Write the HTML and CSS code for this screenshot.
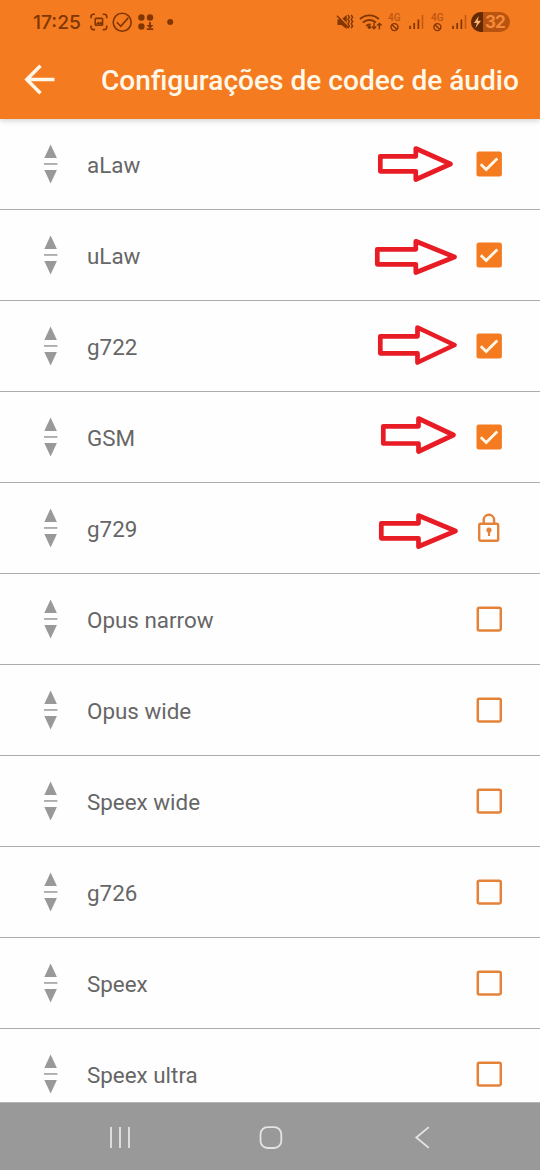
FILE: index.html
```
<!DOCTYPE html>
<html lang="pt">
<head>
<meta charset="utf-8">
<title>Configurações de codec de áudio</title>
<link rel="stylesheet" href="styles.css">
</head>
<body>
<svg class="defs" width="0" height="0" aria-hidden="true">
  <symbol id="drag" viewBox="0 0 14 40"><path d="M6.6 .5 12.9 14H.3ZM.3 26h12.6L6.6 39.5Z"/><path d="M0 19.2h13.4v1.5H0Z"/></symbol>
  <symbol id="on" viewBox="0 0 26 26"><rect x=".5" y=".5" width="25.4" height="25" rx="2.5" fill="#f47b20"/><path d="m4.8 13.3 5.4 5.2L21.3 7.4" fill="none" stroke="#fff8e8" stroke-width="2.8"/></symbol>
  <symbol id="off" viewBox="0 0 26 26"><rect x="1.8" y="1.8" width="23" height="22.6" rx="1.5" fill="none" stroke="#e5823a" stroke-width="2.5"/></symbol>
  <symbol id="lock" viewBox="0 0 26 30"><g fill="none" stroke="#e5823a" stroke-width="2.4"><rect x="3.2" y="10.8" width="19" height="17" rx="1.5"/><path d="M7.7 10.5V7a5.2 5.2 0 0 1 10.4 0v3.5"/></g><circle cx="13" cy="17" r="2.6" fill="#e5823a"/><path d="M13 17v6" stroke="#e5823a" stroke-width="2.2"/></symbol>
</svg>
<div class="screen">
  <header class="header">
    <div class="status">
      <span class="clock">17:25</span>
      <svg class="notices" width="86" height="22" viewBox="0 0 86 22">
        <g fill="none" stroke="#813600" stroke-width="1.6">
          <path d="M1 7.3V5.5a2.3 2.3 0 0 1 2.3-2.3H5M12.7 3.2h1.7a2.3 2.3 0 0 1 2.3 2.3v1.8M16.7 14.5v1.8a2.3 2.3 0 0 1-2.3 2.3h-1.7M5 18.6H3.3A2.3 2.3 0 0 1 1 16.3v-1.8"/>
          <rect x="5.2" y="7.4" width="7.4" height="6.8" rx=".8"/>
          <circle cx="32.2" cy="11.3" r="9"/>
          <path d="m26.8 11.2 4 4.2 7.4-8.5"/>
        </g>
        <g fill="#813600">
          <path d="m5.5 13.5 2.6-3 1.5 1.2 1.4-1.5 2 3.3Z"/>
          <circle cx="51.4" cy="6.5" r="3.2"/><circle cx="60" cy="6.5" r="3.2"/><circle cx="51.4" cy="15.5" r="3.2"/>
          <path d="M59.1 11h1.8v3h2.6L60 17.4 56.5 14h2.6ZM56.8 17.3h6.4V19h-6.4Z"/>
          <circle cx="80.2" cy="11" r="3"/>
        </g>
      </svg>
      <svg class="indicators" width="132" height="22" viewBox="0 0 132 22">
        <path d="M1.5 8.2h4l5.2-4.1v14l-5.2-4h-4Z" fill="#813600"/>
        <path d="m1 3.7 13.5 13.8" stroke="#f47b20" stroke-width="2.4"/>
        <path d="m1 4.7 12 12.5M11.9 4l1.5 2.2-1.5 2.2 1.5 2.2-1.5 2.2 1.5 2.2-1.5 2.2M15.2 4l1.4 2.2-1.4 2.2 1.4 2.2-1.4 2.2 1.4 2.2-1.4 2.2" fill="none" stroke="#813600" stroke-width="1.4"/>
        <g fill="none" stroke="#813600" stroke-width="1.9"><path d="M24 8a14 14 0 0 1 18.8 0M26.9 11.6a9.5 9.5 0 0 1 13-.1M30.2 15a5.5 5.5 0 0 1 4.5-1.4"/></g>
        <circle cx="33.4" cy="16.2" r="1.7" fill="#813600"/>
        <path d="M38 11.7v6M35.8 15.6l2.2 2.2 2.2-2.2M43.4 18.5v-6M41.2 14.6l2.2-2.2 2.2 2.2" fill="none" stroke="#813600" stroke-width="1.4"/>
        <g font-family="Roboto, sans-serif" font-size="10" font-weight="500" fill="#bd5710"><text x="52" y="10">4G</text><text x="95" y="10">4G</text></g>
        <g fill="none" stroke="#813600" stroke-width="1.4"><circle cx="58.5" cy="16.1" r="3.5"/><path d="m56 13.7 5 4.8"/><circle cx="101.4" cy="16.1" r="3.5"/><path d="m98.9 13.7 5 4.8"/></g>
        <g stroke="#813600" stroke-width="1.7"><path d="M74 14.8v3.2M78.2 12v6M82.4 8.5V18M117 14.8v3.2M121.2 12v6M125.4 8.5V18"/></g>
        <path d="M86.5 4v14M129.5 4v14" stroke="#c25a10" stroke-width="1.6"/>
      </svg>
      <span class="battery"><svg width="12" height="20" viewBox="0 0 12 20"><path d="M0 0h12v20H0Z" fill="#642a04"/><path d="M7.7 4 3 11h3l-1.5 5L10 8.7H6.7Z" fill="#ffb472"/></svg><b>32</b></span>
    </div>
    <div class="toolbar">
      <svg class="back" width="32" height="32" viewBox="0 0 32 32"><path d="M30.5 15.5H3M16.5 1.8 2.8 15.5l13.7 13.7" fill="none" stroke="#fff8e8" stroke-width="3.5"/></svg>
      <h1>Configurações de codec de áudio</h1>
    </div>
  </header>
  <main class="list">
    <div class="row"><svg class="drag"><use href="#drag"/></svg><span class="name">aLaw</span><svg class="box"><use href="#on"/></svg></div>
    <div class="row"><svg class="drag"><use href="#drag"/></svg><span class="name">uLaw</span><svg class="box"><use href="#on"/></svg></div>
    <div class="row"><svg class="drag"><use href="#drag"/></svg><span class="name">g722</span><svg class="box"><use href="#on"/></svg></div>
    <div class="row"><svg class="drag"><use href="#drag"/></svg><span class="name">GSM</span><svg class="box"><use href="#on"/></svg></div>
    <div class="row"><svg class="drag"><use href="#drag"/></svg><span class="name">g729</span><svg class="box lock"><use href="#lock"/></svg></div>
    <div class="row"><svg class="drag"><use href="#drag"/></svg><span class="name">Opus narrow</span><svg class="box"><use href="#off"/></svg></div>
    <div class="row"><svg class="drag"><use href="#drag"/></svg><span class="name">Opus wide</span><svg class="box"><use href="#off"/></svg></div>
    <div class="row"><svg class="drag"><use href="#drag"/></svg><span class="name">Speex wide</span><svg class="box"><use href="#off"/></svg></div>
    <div class="row"><svg class="drag"><use href="#drag"/></svg><span class="name">g726</span><svg class="box"><use href="#off"/></svg></div>
    <div class="row"><svg class="drag"><use href="#drag"/></svg><span class="name">Speex</span><svg class="box"><use href="#off"/></svg></div>
    <div class="row"><svg class="drag"><use href="#drag"/></svg><span class="name">Speex ultra</span><svg class="box"><use href="#off"/></svg></div>
  </main>
  <nav class="nav">
    <svg width="24" height="24" viewBox="0 0 24 24"><path d="M3 1v21M12 1v21M21 1v21"/></svg>
    <svg width="24" height="24" viewBox="0 0 24 24"><rect x="1.5" y="1.2" width="20.8" height="20.8" rx="7"/></svg>
    <svg width="24" height="24" viewBox="0 0 24 24"><path d="M18.8 1.1 6.3 11.5l12.5 10.4"/></svg>
  </nav>
  <svg class="arrows" viewBox="370 140 100 420">
    <path d="M380.3 156.3h35.5v-7.8L450.5 164l-34.7 15.5v-8.2h-35.5Z"/>
    <path d="M377.3 249.3h38.5v-8L454.5 257l-38.7 15.5v-8.2h-38.5Z"/>
    <path d="M380.3 336.3h37.2v-8.8L454.5 345l-37 17.5v-9.2h-37.2Z"/>
    <path d="M383.3 426.3h35.2v-7.8L453.5 435l-35 16.5v-8h-35.2Z"/>
    <path d="M381.3 523.3h37.2v-7.8L455.5 531l-37 15.5v-8.2h-37.2Z"/>
  </svg>
</div>
</body>
</html>
```
FILE: styles.css
```
body {
  margin: 0;
  background: #fefefe;
  font-family: Roboto, sans-serif;
}
.defs {
  position: absolute;
}
.screen {
  position: relative;
  display: flex;
  flex-direction: column;
  width: 540px;
  height: 1170px;
  overflow: hidden;
}
.header {
  flex: none;
  height: 119px;
  background: #f57b20;
  box-shadow: 0 1px 6px rgba(0, 0, 0, .22);
  z-index: 1;
}
.status {
  display: flex;
  align-items: center;
  height: 44px;
  padding: 0 30px 0 33px;
}
.clock {
  width: 57px;
  font: 500 19.3px/22px Inter, sans-serif;
  color: #813600;
}
.indicators {
  margin-left: auto;
  margin-right: 3px;
}
.battery {
  display: flex;
  align-items: center;
  width: 39px;
  height: 20px;
  border-radius: 10px;
  overflow: hidden;
  background: #b95410;
}
.battery b {
  margin-left: 2px;
  font: 700 17px/20px Inter, sans-serif;
  letter-spacing: -1px;
  color: #f58a39;
}
.toolbar {
  display: flex;
  align-items: center;
  height: 72px;
  padding-left: 24px;
}
.toolbar h1 {
  margin: 2px 0 0 45px;
  font-size: 28.08px;
  font-weight: 500;
  line-height: 36px;
  white-space: nowrap;
  color: #fff8e8;
}
.list {
  flex: 1;
  min-height: 0;
  overflow: hidden;
}
.row {
  display: flex;
  align-items: center;
  box-sizing: border-box;
  height: 91px;
  padding: 0 38px 0 44px;
  border-bottom: 1px solid #adadad;
}
.drag {
  width: 14px;
  height: 40px;
  fill: #999;
}
.name {
  flex: 1;
  margin-left: 29px;
  padding-top: 2px;
  font-size: 22.4px;
  line-height: 30px;
  color: #666;
}
.box {
  width: 26px;
  height: 26px;
}
.lock {
  height: 30px;
}
.nav {
  flex: none;
  display: flex;
  justify-content: space-between;
  align-items: center;
  box-sizing: border-box;
  height: 68px;
  padding: 3px 106px 0 108px;
  border-top: 1px solid #b5b5b5;
  background: #999;
}
.nav svg {
  fill: none;
  stroke: #e4e4e4;
  stroke-width: 1.8;
}
.arrows {
  position: absolute;
  left: 370px;
  top: 140px;
  width: 100px;
  height: 420px;
  fill: none;
  stroke: #e81c24;
  stroke-width: 4.7;
  stroke-linejoin: round;
}
```
